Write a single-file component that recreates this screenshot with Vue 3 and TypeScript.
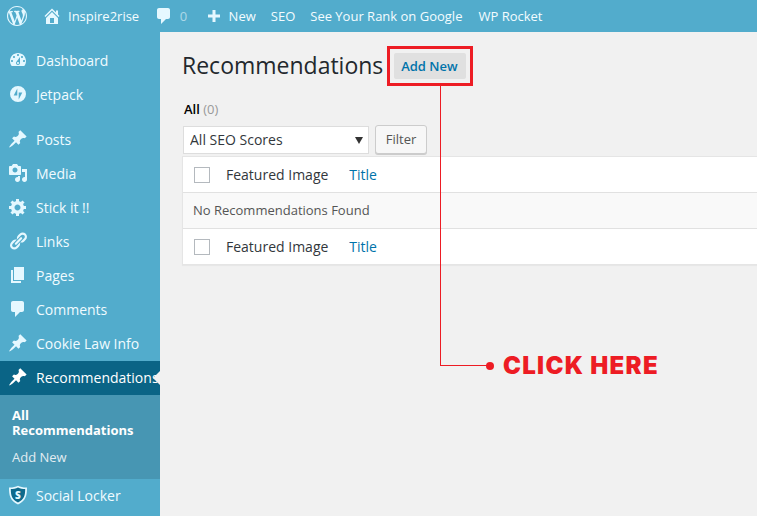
<script setup lang="ts">
interface MenuItem {
  label: string;
  path?: string;
  kind?: string;
  sepBefore?: boolean;
}
const pin = "M10.44 3.02l1.82-1.82 6.36 6.35-1.83 1.82c-1.05-.68-2.48-.57-3.41.36l-.75.75c-.92.93-1.04 2.35-.35 3.41l-1.83 1.82-2.41-2.41-2.8 2.79c-.42.42-3.38 2.71-3.8 2.29s1.86-3.39 2.28-3.81l2.79-2.79L4.1 9.36l1.83-1.82c1.05.69 2.48.57 3.4-.36l.75-.75c.93-.92 1.05-2.35.36-3.41z";
const bubble = "M5 2h9c1.1 0 2 .9 2 2v7c0 1.1-.9 2-2 2h-2l-5 5v-5H5c-1.1 0-2-.9-2-2V4c0-1.1.9-2 2-2z";
const before: MenuItem[] = [
  { label: "Dashboard", path: "M3.76 16h12.48c1.1-1.37 1.76-3.11 1.76-5 0-4.42-3.58-8-8-8s-8 3.58-8 8c0 1.89.66 3.63 1.76 5zM10 4c.55 0 1 .45 1 1s-.45 1-1 1-1-.45-1-1 .45-1 1-1zM6 6c.55 0 1 .45 1 1s-.45 1-1 1-1-.45-1-1 .45-1 1-1zm8 0c.55 0 1 .45 1 1s-.45 1-1 1-1-.45-1-1 .45-1 1-1zm-5.37 5.55L12 7v6c0 1.1-.9 2-2 2s-2-.9-2-2c0-.57.24-1.08.63-1.45zM4 10c.55 0 1 .45 1 1s-.45 1-1 1-1-.45-1-1 .45-1 1-1zm12 0c.55 0 1 .45 1 1s-.45 1-1 1-1-.45-1-1 .45-1 1-1zm-5 3c0-.55-.45-1-1-1s-1 .45-1 1 .45 1 1 1 1-.45 1-1z" },
  { label: "Jetpack", kind: "jetpack" },
  { label: "Posts", path: pin, sepBefore: true },
  { label: "Media", path: "M13 11V4c0-.55-.45-1-1-1h-1.67L9 1H5L3.67 3H2c-.55 0-1 .45-1 1v7c0 .55.45 1 1 1h10c.55 0 1-.45 1-1zM7 4.5c1.38 0 2.5 1.12 2.5 2.5S8.38 9.5 7 9.5 4.5 8.38 4.5 7 5.62 4.5 7 4.5zM14 6h5v10.5c0 1.38-1.12 2.5-2.5 2.5S14 17.88 14 16.5s1.12-2.5 2.5-2.5c.17 0 .34.02.5.05V9h-3V6zm-4 8.05V13h2v3.5c0 1.38-1.12 2.5-2.5 2.5S7 17.88 7 16.5 8.12 14 9.5 14c.17 0 .34.02.5.05z" },
  { label: "Stick it !!", path: "M18 12h-2.18c-.17.7-.44 1.35-.81 1.93l1.54 1.54-2.1 2.1-1.54-1.54c-.58.36-1.23.63-1.91.79V19H8v-2.18c-.68-.16-1.33-.43-1.91-.79l-1.54 1.54-2.12-2.12 1.54-1.54c-.36-.58-.63-1.23-.79-1.91H1V9.03h2.17c.16-.7.44-1.35.8-1.94L2.43 5.55l2.1-2.1 1.54 1.54c.58-.37 1.24-.64 1.93-.81V2h3v2.18c.68.16 1.33.43 1.91.79l1.54-1.54 2.12 2.12-1.54 1.54c.36.59.64 1.24.8 1.94H18V12zm-8.5 1.5c1.66 0 3-1.34 3-3s-1.34-3-3-3-3 1.34-3 3 1.34 3 3 3z" },
  { label: "Links", path: "M17.74 2.76c1.68 1.69 1.68 4.41 0 6.1l-1.53 1.52c-1.12 1.12-2.7 1.47-4.14 1.09l2.62-2.61.76-.77.76-.76c.84-.84.84-2.2 0-3.04-.84-.85-2.2-.85-3.04 0l-.77.76-3.38 3.38c-.37-1.44-.02-3.02 1.1-4.14l1.52-1.53c1.69-1.68 4.42-1.68 6.1 0zM8.59 13.43l5.34-5.34c.42-.42.42-1.1 0-1.52-.44-.43-1.13-.39-1.53 0l-5.33 5.34c-.42.42-.42 1.1 0 1.52.44.43 1.13.39 1.52 0zm-.76 2.29l4.14-4.15c.38 1.44.03 3.02-1.09 4.14l-1.52 1.53c-1.69 1.68-4.41 1.68-6.1 0-1.68-1.68-1.68-4.42 0-6.1l1.53-1.52c1.12-1.12 2.7-1.47 4.14-1.1l-4.14 4.15c-.85.84-.85 2.2 0 3.05.84.84 2.2.84 3.04 0z" },
  { label: "Pages", path: "M6 15V2h10v13H6zm-1 1h8v2H3V5h2v11z" },
  { label: "Comments", path: bubble },
  { label: "Cookie Law Info", path: pin },
];
const home = "M16 8.5l1.53 1.53-1.06 1.06L10 4.62l-6.47 6.47-1.06-1.06L10 2.5l4 4v-2h2v4zm-6-2.46l6 5.99V18H4v-5.97zM12 17v-5H8v5h4z";
const wp = "M20 10c0-5.51-4.49-10-10-10C4.48 0 0 4.49 0 10c0 5.52 4.48 10 10 10 5.51 0 10-4.48 10-10zM7.78 15.37L4.37 6.22c.55-.02 1.17-.08 1.17-.08.5-.06.44-1.13-.06-1.11 0 0-1.45.11-2.37.11-.18 0-.37 0-.58-.01C4.12 2.69 6.87 1.11 10 1.11c2.33 0 4.45.87 6.05 2.34-.68-.11-1.65.39-1.65 1.58 0 .74.45 1.36.9 2.1.35.61.55 1.36.55 2.46 0 1.49-1.4 5-1.4 5l-3.03-8.37c.54-.02.82-.17.82-.17.5-.05.44-1.25-.06-1.22 0 0-1.44.12-2.38.12-.87 0-2.33-.12-2.33-.12-.5-.03-.56 1.2-.06 1.22l.92.08 1.26 3.41zM17.41 10c.24-.64.74-1.87.43-4.25.7 1.29 1.05 2.71 1.05 4.25 0 3.29-1.73 6.24-4.4 7.78.97-2.59 1.94-5.2 2.92-7.78zM6.1 18.09C3.12 16.65 1.11 13.53 1.11 10c0-1.3.23-2.48.72-3.59C3.25 10.3 4.67 14.2 6.1 18.09zm4.03-6.63l2.58 6.98c-.86.29-1.76.45-2.71.45-.79 0-1.57-.11-2.29-.33.81-2.38 1.62-4.74 2.42-7.1z";
</script>

<template>
  <div class="page">
    <header class="bar">
      <a class="bar-wp"><svg viewBox="0 0 20 20" width="20" height="20"><path :d="wp" fill-rule="evenodd" /></svg></a>
      <a class="bar-item site"><svg viewBox="0 0 20 20" width="20" height="20"><path :d="home" fill-rule="evenodd" /></svg>Inspire2rise</a>
      <a class="bar-item comments"><svg viewBox="0 0 20 20" width="20" height="20"><path :d="bubble" /></svg><span class="count">0</span></a>
      <a class="bar-item new"><svg viewBox="0 0 20 20" width="20" height="20"><path d="M16 8.500v3h-4.500V16h-3v-4.500H4v-3h4.500V4h3v4.500z" /></svg>New</a>
      <a class="bar-item">SEO</a>
      <a class="bar-item">See Your Rank on Google</a>
      <a class="bar-item last">WP Rocket</a>
    </header>

    <div class="body">
      <nav class="side">
        <template v-for="m in before" :key="m.label">
          <a class="menu" :class="{ sep: m.sepBefore }">
            <svg v-if="m.kind === 'jetpack'" class="ico" viewBox="0 0 20 20"><path fill-rule="evenodd" d="M10 2a8 8 0 1 0 0 16 8 8 0 0 0 0-16zM9.300 4.500v7H5.700zM10.700 15.500v-7h3.600z" /></svg>
            <svg v-else class="ico" viewBox="0 0 20 20"><path :d="m.path" fill-rule="evenodd" /></svg>
            <span>{{ m.label }}</span>
          </a>
        </template>
        <a class="menu active">
          <svg class="ico" viewBox="0 0 20 20"><path :d="pin" /></svg>
          <span>Recommendations</span>
          <i class="pointer"></i>
        </a>
        <div class="sub">
          <a class="sub-current">All Recommendations</a>
          <a class="sub-link">Add New</a>
        </div>
        <a class="menu">
          <svg class="ico" viewBox="0 0 20 20">
            <path d="M10 .8c2.500 1.300 5.500 1.900 9 1.800 0 7.400-.8 13.300-9 16.800C1.800 15.900 1 10 1 2.600c3.500.1 6.500-.5 9-1.800z" />
            <path fill="#0e6a8c" d="M10 2.600c2.200 1 4.700 1.500 7.200 1.500 0 6-.9 10.700-7.200 13.400C3.700 14.800 2.800 10.100 2.800 4.100c2.500 0 5-.5 7.200-1.500z" />
            <text x="10" y="13.500" text-anchor="middle" class="shield-s">S</text>
          </svg>
          <span>Social Locker</span>
        </a>
      </nav>

      <main class="main">
        <div class="head">
          <h1>Recommendations</h1>
          <a class="add">Add New</a>
        </div>
        <div class="views"><b>All</b> <span>(0)</span></div>
        <div class="filters">
          <div class="select-wrap">
            <select class="select"><option>All SEO Scores</option></select>
            <i class="caret"></i>
          </div>
          <button class="filter" type="button">Filter</button>
        </div>
        <div class="table">
          <div class="row">
            <input class="check" type="checkbox" />
            <span class="col">Featured Image</span>
            <a class="title">Title</a>
          </div>
          <div class="row empty">No Recommendations Found</div>
          <div class="row">
            <input class="check" type="checkbox" />
            <span class="col">Featured Image</span>
            <a class="title">Title</a>
          </div>
        </div>
      </main>
    </div>

    <div class="callout-box"></div>
    <div class="callout-v"></div>
    <div class="callout-h"></div>
    <div class="callout-dot"></div>
    <div class="callout-text">CLICK HERE</div>
  </div>
</template>

<style>
html, body { margin: 0; overflow: hidden; }
</style>

<style scoped>
.page {
  position: relative;
  width: 757px;
  height: 516px;
  overflow: hidden;
  background: #f1f1f1;
  font-family: "Open Sans", sans-serif;
  font-size: 14px;
}
.bar {
  display: flex;
  align-items: center;
  height: 32px;
  background: #52accc;
  color: #f4fcff;
  font-size: 13px;
}
.bar svg { fill: #e5f8ff; flex: none; }
.bar-wp { display: flex; padding-left: 7px; width: 37px; box-sizing: border-box; }
.bar-item { display: flex; align-items: center; padding: 0 7.5px; white-space: nowrap; }
.site { padding-left: 5px; }
.site svg { margin-right: 6px; }
.comments { padding-left: 7px; }
.comments svg { margin-right: 6px; }
.count { opacity: 0.55; }
.new { padding-left: 9px; }
.new svg { margin-right: 5px; }
.last { margin-left: 1px; }
.body { display: flex; height: 484px; }
.side {
  width: 160px;
  flex: none;
  background: #52accc;
  padding-top: 12px;
  box-sizing: border-box;
}
.menu {
  position: relative;
  display: flex;
  align-items: center;
  height: 34px;
  box-sizing: border-box;
  padding-bottom: 2px;
  color: #f0fbff;
  white-space: nowrap;
}
.menu.sep { margin-top: 11px; }
.ico { width: 20px; height: 20px; margin: 0 8px; flex: none; fill: #e5f8ff; }
.shield-s { font-family: "Open Sans", sans-serif; font-weight: 800; font-size: 10px; fill: #e5f8ff; }
.active { background: #0a6486; color: #fff; }
.active .ico { fill: #fff; }
.pointer {
  position: absolute;
  right: 0;
  top: 10px;
  border: 7px solid transparent;
  border-left-width: 0;
  border-right-color: #f1f1f1;
}
.sub {
  height: 84px;
  box-sizing: border-box;
  background: #4796b3;
  padding: 13px 12px 0;
  font-size: 13px;
  line-height: 15px;
}
.sub a { display: block; }
.sub-current { color: #fff; font-weight: 700; }
.sub-link { color: #e2ecf1; margin-top: 12px; }
.main {
  flex: 1;
  min-width: 0;
  padding: 0 0 0 23px;
  color: #444;
  font-size: 14px;
}
.head {
  display: flex;
  align-items: center;
  height: 26px;
  margin-top: 21px;
}
.head h1 {
  margin: -2px -1px 0 -1px;
  font-size: 23px;
  font-weight: 400;
  color: #23282d;
  line-height: 26px;
  white-space: nowrap;
}
.add {
  display: block;
  margin-left: 12px;
  width: 72px;
  height: 26px;
  line-height: 26px;
  box-sizing: border-box;
  padding-right: 2px;
  text-align: center;
  border-radius: 2px;
  background: #e0e0e0;
  color: #0073aa;
  font-size: 13px;
  font-weight: 600;
}
.views {
  margin: 22px 0 0 1px;
  height: 17px;
  line-height: 17px;
  font-size: 13px;
  color: #000;
}
.views b { font-weight: 600; }
.views span { color: #999; }
.filters { display: flex; align-items: flex-start; margin-top: 7px; height: 31px; }
.select-wrap { position: relative; margin-top: 1px; }
.select {
  display: block;
  appearance: none;
  width: 186px;
  height: 28px;
  box-sizing: border-box;
  background: #fff;
  border: 1px solid #ddd;
  border-radius: 0;
  padding: 0 6px 2px;
  color: #32373c;
  font: 14px "Open Sans", sans-serif;
}
.caret {
  position: absolute;
  right: 6px;
  top: 11px;
  border: 4px solid transparent;
  border-top: 7px solid #333;
  border-bottom-width: 0;
}
.filter {
  margin-left: 6px;
  width: 52px;
  height: 29px;
  padding: 0 0 2px;
  box-sizing: border-box;
  background: #f7f7f7;
  border: 1px solid #ccc;
  border-radius: 3px;
  box-shadow: 0 1px 0 #ccc;
  color: #555;
  font: 13px "Open Sans", sans-serif;
}
.table {
  width: 640px;
  margin-left: -1px;
  background: #fff;
  border: 1px solid #e5e5e5;
  box-shadow: 0 1px 1px rgba(0, 0, 0, 0.04);
}
.row {
  display: flex;
  align-items: center;
  height: 35px;
  box-sizing: border-box;
}
.row.empty {
  height: 37px;
  background: #f9f9f9;
  border-top: 1px solid #e1e1e1;
  border-bottom: 1px solid #e1e1e1;
  padding: 0 0 2px 10px;
  font-size: 13px;
  color: #555;
}
.check {
  appearance: none;
  width: 16px;
  height: 16px;
  margin: 0 0 0 11px;
  box-sizing: border-box;
  background: #fff;
  border: 1px solid #b4b9be;
}
.col { margin-left: 16px; color: #32373c; }
.title { margin-left: 21px; color: #0073aa; }
.callout-box {
  position: absolute;
  left: 387px;
  top: 46px;
  width: 86px;
  height: 40px;
  box-sizing: border-box;
  border: 3px solid #ed1c24;
}
.callout-v {
  position: absolute;
  left: 440px;
  top: 86px;
  width: 1px;
  height: 280px;
  background: #ed1c24;
}
.callout-h {
  position: absolute;
  left: 440px;
  top: 365px;
  width: 50px;
  height: 1px;
  background: #ed1c24;
}
.callout-dot {
  position: absolute;
  left: 486px;
  top: 362px;
  width: 8px;
  height: 8px;
  border-radius: 50%;
  background: #ed1c24;
}
.callout-text {
  position: absolute;
  left: 503px;
  top: 349px;
  line-height: 33px;
  font-family: Inter, sans-serif;
  font-weight: 900;
  font-size: 24px;
  letter-spacing: 1.3px;
  color: #ed1c24;
  white-space: nowrap;
}
</style>
